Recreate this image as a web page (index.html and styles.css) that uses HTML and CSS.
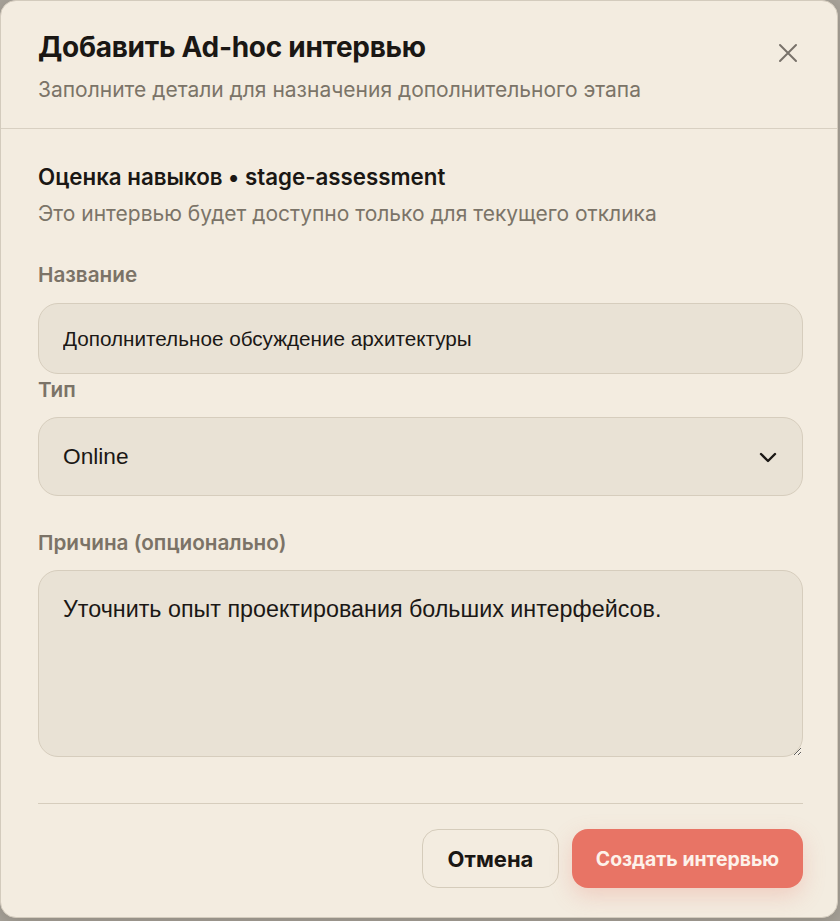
FILE: index.html
```html
<!DOCTYPE html>
<html lang="ru">
<head>
<meta charset="utf-8">
<title>Добавить Ad-hoc интервью</title>
<link rel="stylesheet" href="styles.css">
</head>
<body>
<div class="dialog" role="dialog" aria-labelledby="dlg-title">
  <header class="dialog-header">
    <div class="header-text">
      <h1 id="dlg-title" class="title">Добавить Ad-hoc интервью</h1>
      <p class="subtitle">Заполните детали для назначения дополнительного этапа</p>
    </div>
    <button class="close" type="button" aria-label="Закрыть">
      <svg width="20" height="20" viewBox="0 0 20 20" fill="none" stroke="currentColor" stroke-width="2" stroke-linecap="round"><path d="M2 2 L18 18 M18 2 L2 18"/></svg>
    </button>
  </header>

  <section class="dialog-body">
    <h2 class="stage">Оценка навыков • stage-assessment</h2>
    <p class="stage-note">Это интервью будет доступно только для текущего отклика</p>

    <label class="label label-first" for="f-name">Название</label>
    <input id="f-name" class="field input" type="text" value="Дополнительное обсуждение архитектуры">

    <label class="label label-tight">Тип</label>
    <div class="field select">
      <span>Online</span>
      <svg width="18" height="12" viewBox="0 0 18 12" fill="none" stroke="currentColor" stroke-width="2.4" stroke-linecap="round" stroke-linejoin="round"><path d="M2 3 L9 10 L16 3"/></svg>
    </div>

    <label class="label" for="f-reason">Причина (опционально)</label>
    <textarea id="f-reason" class="field textarea">Уточнить опыт проектирования больших интерфейсов.</textarea>

    <div class="actions">
      <button class="btn btn-ghost" type="button">Отмена</button>
      <button class="btn btn-primary" type="button">Создать интервью</button>
    </div>
  </section>
</div>
</body>
</html>
```

FILE: styles.css
```css
* { box-sizing: border-box; }

html, body {
  margin: 0;
  padding: 0;
  background: #a9a49b;
}

body {
  width: 840px;
  height: 921px;
  overflow: hidden;
  font-family: Inter, "Noto Sans", sans-serif;
  color: #1b1815;
}

.dialog {
  width: 838px;
  height: 918px;
  background: #f3ece0;
  border: 1px solid #d3cbbd;
  border-radius: 16px;
  box-shadow: 0 4px 20px rgba(60, 50, 40, 0.25);
  display: flex;
  flex-direction: column;
  overflow: hidden;
}

/* header */
.dialog-header {
  display: flex;
  justify-content: space-between;
  align-items: flex-start;
  padding: 30px 38px 25px 37px;
  border-bottom: 1px solid #d8d0c2;
}

.title {
  margin: 0;
  font-size: 28px;
  line-height: 32px;
  font-weight: 700;
  letter-spacing: -0.01em;
  color: #1a1714;
}

.subtitle {
  margin: 14px 0 0;
  font-size: 21px;
  line-height: 26px;
  color: #7b7468;
}

.close {
  margin: 12px 1px 0 0;
  padding: 0;
  border: 0;
  background: none;
  color: #78726a;
  width: 20px;
  height: 20px;
  display: flex;
}

/* body */
.dialog-body {
  padding: 34px 34px 0 37px;
  display: flex;
  flex-direction: column;
}

.stage {
  margin: 0;
  font-size: 22.3px;
  line-height: 28px;
  font-weight: 600;
  color: #1a1714;
}

.stage-note {
  margin: 10px 0 0;
  font-size: 21px;
  line-height: 26px;
  color: #7b7468;
}

.label {
  display: block;
  margin: 34px 0 14px;
  font-size: 20.7px;
  line-height: 26px;
  font-weight: 600;
  color: #7b7367;
}

.label-first { margin-top: 35px; margin-bottom: 15px; }
.label-tight { margin-top: 3px; }

.field {
  width: 100%;
  background: #e9e2d5;
  border: 1px solid #d6cdbd;
  border-radius: 20px;
  font-family: "Liberation Sans", Arial, sans-serif;
  color: #1b1815;
  outline: none;
}

.input {
  height: 71px;
  padding: 0 24px;
  font-size: 20.7px;
}

.select {
  height: 79px;
  padding: 0 25px 0 24px;
  display: flex;
  align-items: center;
  justify-content: space-between;
  font-size: 22.7px;
}

.textarea {
  display: block;
  height: 187px;
  padding: 24px 24px;
  font-size: 23.3px;
  line-height: 28px;
  resize: vertical;
}

/* footer actions */
.actions {
  margin-top: 46px;
  padding-top: 25px;
  border-top: 1px solid #d6cdbd;
  display: flex;
  justify-content: flex-end;
  gap: 13px;
}

.btn {
  height: 59px;
  border-radius: 16px;
  font-family: Inter, "Noto Sans", sans-serif;
  font-weight: 700;
  padding: 0;
  white-space: nowrap;
  cursor: pointer;
}

.btn-ghost {
  width: 137px;
  font-size: 22px;
  background: #f3ece0;
  border: 1px solid #d5ccbb;
  color: #1a1714;
}

.btn-primary {
  width: 231px;
  font-size: 19.4px;
  background: #e87465;
  border: 0;
  color: #fdf2ea;
  box-shadow: 0 8px 22px rgba(232, 116, 101, 0.25);
}
```
